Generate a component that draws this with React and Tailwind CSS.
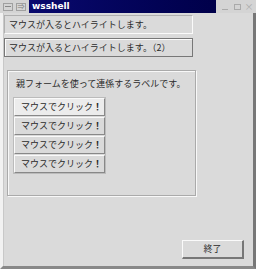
export default function App() {
  const font = { fontFamily: '"Noto Sans CJK JP", "Noto Sans", sans-serif' };
  return (
    <div className="w-[256px] h-[269px] bg-[#dadada] flex flex-col overflow-hidden text-[#2a2a2a]" style={font}>
      {/* Title bar */}
      <div className="h-[13px] flex shrink-0">
        <div className="w-[29px] flex items-center gap-[3px] pl-[3px] bg-[#d4d4d4]">
          <div className="w-[10px] h-[8px] border border-[#a0a0a0] flex items-center justify-center">
            <div className="w-[6px] h-[1px] bg-[#888]" />
          </div>
          <div className="w-[10px] h-[8px] border border-[#a0a0a0] flex items-center justify-center text-[7px] leading-none text-[#777]">⇒</div>
        </div>
        <div className="flex-1 bg-gradient-to-r from-[#0a0a6e] to-[#00004a] flex items-center pl-[3px]">
          <span className="text-white text-[9px] font-bold leading-none" style={{ fontFamily: '"DejaVu Sans", sans-serif' }}>wsshell</span>
        </div>
        <div className="w-[40px] bg-[#d4d4d4] flex items-center justify-end gap-[2px] pr-[2px]">
          <div className="w-[10px] h-[9px] flex items-end justify-center pb-[1px]"><div className="w-[6px] h-[1px] bg-[#aaa]" /></div>
          <div className="w-[10px] h-[9px] flex items-center justify-center"><div className="w-[7px] h-[6px] border border-[#aaa]" /></div>
          <div className="w-[10px] h-[9px] flex items-center justify-center text-[9px] leading-none text-[#aaa]">×</div>
        </div>
      </div>
      {/* Body */}
      <div className="flex-1 flex border-l-[3px] border-l-[#f2f2f2] border-r-[3px] border-r-[#777] border-b-[3px] border-b-[#888]">
        <div className="w-[1px] bg-[#c8c8c8]" />
        <div className="flex-1 flex flex-col pt-[2px] text-[9px]">
          <div className="w-[189px] h-[19px] flex items-center pl-[4px] border-t border-t-[#b0b0b0] border-b border-b-[#fafafa] border-r border-r-[#fafafa] border-l border-l-[#b0b0b0]">
            マウスが入るとハイライトします。
          </div>
          <div className="w-[189px] h-[19px] mt-[4px] flex items-center pl-[4px] border border-[#777] shadow-[inset_1px_1px_0_#fafafa]">
            マウスが入るとハイライトします。（2）
          </div>
          <div className="mt-[13px] ml-[3px] w-[189px] h-[126px] border border-[#aaa] shadow-[inset_1px_1px_0_#f8f8f8,1px_1px_0_#f8f8f8] flex flex-col pl-[5px] pt-[6px]">
            <div className="h-[14px] flex items-center pl-[3px]">親フォームを使って連係するラベルです。</div>
            <div className="mt-[6px] w-[93px] flex flex-col gap-[1px] border border-[#bbb]">
              {[0, 1, 2, 3].map((i) => (
                <div key={i} className={`h-[18px] flex items-center pl-[6px] border-t border-t-[#fafafa] border-l border-l-[#fafafa] border-b border-b-[#888] border-r border-r-[#888] ${i === 0 ? "bg-[#ececec]" : "bg-[#dadada]"}`}>
                  マウスでクリック<span className="font-bold">！</span>
                </div>
              ))}
            </div>
          </div>
          <div className="flex-1" />
          <div className="flex justify-end pr-[9px] pb-[7px]">
            <div className="w-[62px] h-[19px] flex items-center justify-center border-t border-t-[#fafafa] border-l border-l-[#fafafa] border-b-2 border-b-[#777] border-r-2 border-r-[#777]">
              終了
            </div>
          </div>
        </div>
      </div>
    </div>
  );
}
